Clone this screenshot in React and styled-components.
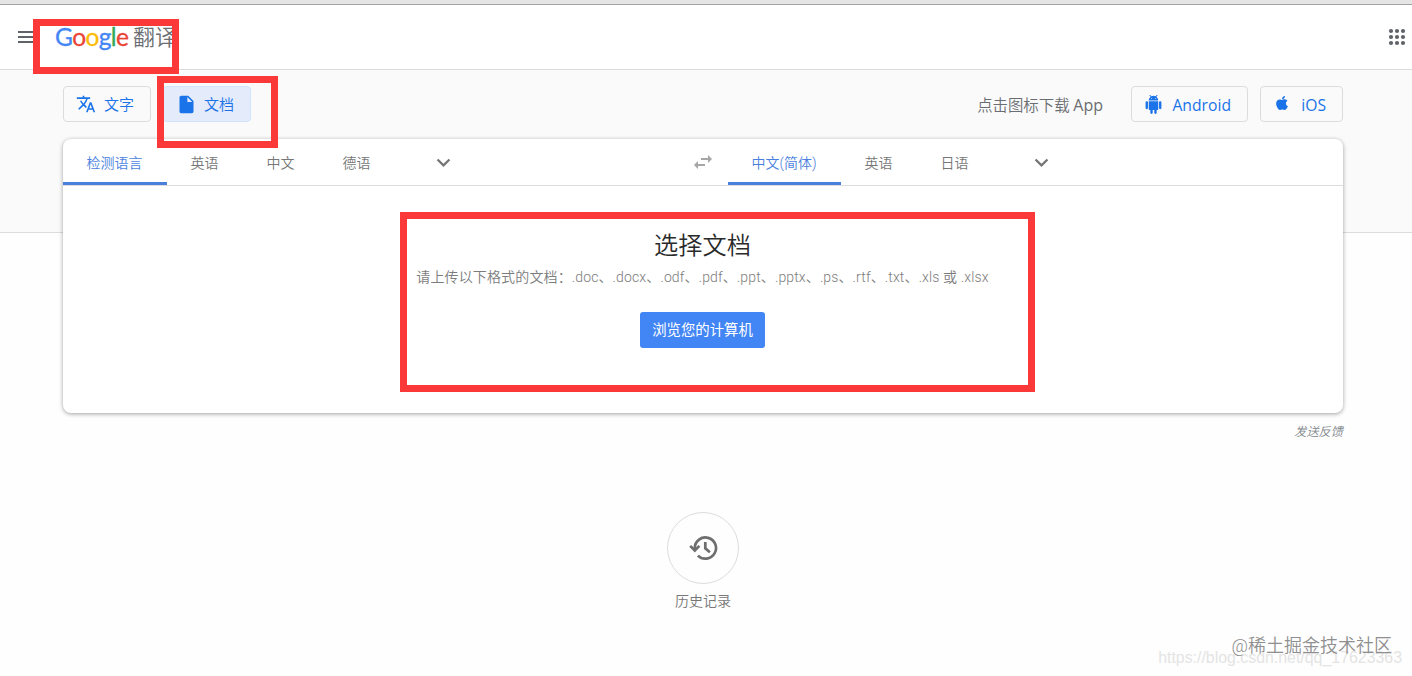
import React from 'react'
import styled, { createGlobalStyle } from 'styled-components'
import { MdMenu, MdTranslate, MdInsertDriveFile, MdExpandMore, MdSwapHoriz } from 'react-icons/md'
import { FaApple } from 'react-icons/fa'

const logoLetters = [
  ['G', '#4285f4'],
  ['o', '#ea4335'],
  ['o', '#fbbc05'],
  ['g', '#4285f4'],
  ['l', '#34a853'],
  ['e', '#ea4335'],
]

function AndroidIcon() {
  return (
    <svg width="19" height="19" viewBox="0 0 24 24" fill="#1a73e8">
      <path d="M6 18c0 .55.45 1 1 1h1v3.5c0 .83.67 1.5 1.5 1.5s1.5-.67 1.5-1.5V19h2v3.5c0 .83.67 1.5 1.5 1.5s1.5-.67 1.5-1.5V19h1c.55 0 1-.45 1-1V8H6v10zM3.5 8C2.67 8 2 8.67 2 9.5v7c0 .83.67 1.5 1.5 1.5S5 17.33 5 16.5v-7C5 8.67 4.33 8 3.5 8zm17 0c-.83 0-1.5.67-1.5 1.5v7c0 .83.67 1.5 1.5 1.5s1.5-.67 1.5-1.5v-7c0-.83-.67-1.5-1.5-1.5zm-4.97-5.84l1.3-1.3c.2-.2.2-.51 0-.71-.2-.2-.51-.2-.71 0l-1.48 1.48C13.85 1.23 12.95 1 12 1c-.96 0-1.86.23-2.66.63L7.85.15c-.2-.2-.51-.2-.71 0-.2.2-.2.51 0 .71l1.31 1.31C6.97 3.26 6 5.01 6 7h12c0-1.99-.97-3.75-2.47-4.84zM10 5H9V4h1v1zm5 0h-1V4h1v1z" />
    </svg>
  )
}

function AppsIcon() {
  const dots = [6, 12, 18]
  return (
    <svg width="24" height="24" viewBox="0 0 24 24" fill="#5f6368">
      {dots.map(y => dots.map(x => <circle key={`${x}-${y}`} cx={x} cy={y} r="2.1" />))}
    </svg>
  )
}

function HistoryIcon() {
  return (
    <svg width="32" height="32" viewBox="0 0 32 32" fill="none" stroke="#6e6e6e" strokeWidth="2.7">
      <path d="M7.8 17.5V16a10.6 10.6 0 1 1 3.1 7.6" />
      <path d="M3.2 13.9l4.6 4.6 4.6-4.6" />
      <path d="M18.3 10v6.4l4.6 3.9" />
    </svg>
  )
}

function App() {
  return (
    <Page>
      <GlobalStyle />
      <TopStrip />
      <Header>
        <MenuIcon />
        <Logo>
          <Brand>
            {logoLetters.map(([letter, color], i) => (
              <Letter key={i} color={color}>{letter}</Letter>
            ))}
          </Brand>
          <Product>翻译</Product>
        </Logo>
        <AppsIcon />
      </Header>

      <Band />
      <Main>
        <Toolbar>
          <ModeButton>
            <MdTranslate size={20} />
            <span>文字</span>
          </ModeButton>
          <ModeButton $active>
            <MdInsertDriveFile size={21} />
            <span>文档</span>
          </ModeButton>
          <StoreText>点击图标下载 <span>App</span></StoreText>
          <StoreButton $width={117}>
            <AndroidIcon />
            <span>Android</span>
          </StoreButton>
          <StoreButton $width={83}>
            <AppleIcon />
            <span>iOS</span>
          </StoreButton>
        </Toolbar>

        <Card>
          <LanguageBar>
            <Side $width={629}>
              <Tab $active $width={104}>检测语言</Tab>
              <Tab>英语</Tab>
              <Tab>中文</Tab>
              <Tab>德语</Tab>
              <MoreIcon />
            </Side>
            <SwapIcon />
            <Side>
              <Tab $active $width={113}>中文(简体)</Tab>
              <Tab>英语</Tab>
              <Tab>日语</Tab>
              <MoreIcon />
            </Side>
          </LanguageBar>
          <Upload>
            <Title>选择文档</Title>
            <Formats>
              请上传以下格式的文档：.doc、.docx、.odf、.pdf、.ppt、.pptx、.ps、.rtf、.txt、.xls 或 .xlsx
            </Formats>
            <Browse>浏览您的计算机</Browse>
          </Upload>
        </Card>
        <Feedback>发送反馈</Feedback>
        <History>
          <HistoryCircle>
            <HistoryIcon />
          </HistoryCircle>
          历史记录
        </History>
      </Main>

      <Marker $x={33} $y={19} $w={146} $h={55} />
      <Marker $x={157} $y={76} $w={121} $h={72} />
      <Marker $x={400} $y={212} $w={635} $h={180} />
      <BlogMark>https://blog.csdn.net/qq_17623363</BlogMark>
      <SiteMark>@稀土掘金技术社区</SiteMark>
    </Page>
  )
}

export default App

const GlobalStyle = createGlobalStyle`
*{
    box-sizing:border-box;
}
body{
    margin:0;
    background:#fefefe;
    font-family:Roboto, "Noto Sans CJK SC", sans-serif;
    font-weight:350;
}
button{
    font-family:inherit;
    font-weight:inherit;
    padding:0;
}
`

const Page = styled.div`
position:relative;
width:1412px;
height:676px;
overflow:hidden;
`

const TopStrip = styled.div`
height:5px;
background:#e5e5e5;
border-bottom:1px solid #a3a3a3;
`

const Header = styled.header`
display:flex;
align-items:center;
height:65px;
padding:0 3px 0 15px;
background:white;
border-bottom:1px solid #dadce0;
`

const MenuIcon = styled(MdMenu)`
width:24px;
height:24px;
color:#5f6368;
`

const Logo = styled.div`
display:flex;
align-items:center;
flex:1;
padding-left:15px;
white-space:nowrap;
`

const Brand = styled.div`
width:79px;
padding:0 0 1px 1px;
font-family:Lato, sans-serif;
font-weight:400;
font-size:24.5px;
line-height:30px;
letter-spacing:-0.6px;
`

const Letter = styled.span`
color:${props => props.color};
-webkit-text-stroke:0.3px ${props => props.color};
`

const Product = styled.div`
padding-top:2px;
font-size:22px;
line-height:30px;
color:#6a6d71;
`

const Band = styled.div`
height:163px;
margin-bottom:-163px;
background:#fafafa;
border-bottom:1px solid #dadce0;
`

const Main = styled.main`
position:relative;
width:1280px;
margin-left:63px;
padding-top:16px;
`

const Toolbar = styled.div`
display:flex;
align-items:center;
height:36px;
`

const ModeButton = styled.button`
display:flex;
align-items:center;
gap:${props => props.$active ? 7 : 8}px;
width:88px;
height:36px;
margin-right:12px;
padding-left:12px;
border:1px solid ${props => props.$active ? '#d2e3fc' : '#dadce0'};
border-radius:4px;
background:${props => props.$active ? '#e4ebfb' : 'transparent'};
color:#1a73e8;
font-size:15px;
span{
    padding-bottom:2px;
}
`

const StoreText = styled.div`
margin-left:auto;
margin-right:16px;
font-size:15.4px;
color:#6a6d71;
span{
    font-family:"Open Sans", sans-serif;
    font-weight:400;
    font-size:16px;
}
`

const StoreButton = styled.button`
display:flex;
align-items:center;
justify-content:space-between;
width:${props => props.$width}px;
height:36px;
margin-left:12px;
padding:0 16px 0 12px;
border:1px solid #dadce0;
border-radius:4px;
background:transparent;
color:#1a73e8;
font-family:"Open Sans", sans-serif;
font-weight:400;
font-size:15.7px;
span{
    padding-top:2px;
}
`

const AppleIcon = styled(FaApple)`
width:16px;
height:16px;
margin:0 0 2px 1px;
`

const Card = styled.section`
height:274px;
margin-top:17px;
background:white;
border-radius:8px;
box-shadow:0 1px 4px rgba(0,0,0,0.37);
`

const LanguageBar = styled.nav`
display:flex;
align-items:center;
height:47px;
border-bottom:1px solid #dadce0;
`

const Side = styled.div`
display:flex;
align-items:center;
width:${props => props.$width ? `${props.$width}px` : 'auto'};
`

const Tab = styled.div`
width:${props => props.$width || 76}px;
height:46px;
padding:3px 1px 0 0;
line-height:43px;
text-align:center;
font-size:14px;
color:${props => props.$active ? '#4a7fe0' : '#777'};
border-bottom:3px solid ${props => props.$active ? '#4a80dc' : 'transparent'};
`

const MoreIcon = styled(MdExpandMore)`
width:27px;
height:27px;
margin:1px 0 0 34.5px;
color:#757575;
`

const SwapIcon = styled(MdSwapHoriz)`
width:24px;
height:24px;
margin:0 13px 0 -1px;
color:#a6a6a6;
`

const Upload = styled.div`
display:flex;
flex-direction:column;
align-items:center;
padding:42px 1px 0 0;
`

const Title = styled.h1`
margin:0;
font-size:24.2px;
font-weight:350;
line-height:36px;
color:#2a2a2a;
`

const Formats = styled.p`
margin:3px 0 24px;
font-size:14px;
line-height:21px;
letter-spacing:0.13px;
color:#7c7c7c;
white-space:nowrap;
`

const Browse = styled.button`
width:125px;
height:36px;
padding-bottom:3px;
border:0;
border-radius:3px;
background:#4285f4;
color:white;
font-size:14.4px;
font-weight:400;
`

const Feedback = styled.div`
margin-top:9px;
text-align:right;
font-size:12.2px;
line-height:20px;
font-style:italic;
color:#80868b;
`

const History = styled.div`
display:flex;
flex-direction:column;
align-items:center;
margin-top:70px;
font-size:14px;
line-height:20px;
color:#777;
`

const HistoryCircle = styled.div`
display:flex;
align-items:center;
justify-content:center;
width:72px;
height:72px;
margin-bottom:7px;
border:1px solid #dcdcdc;
border-radius:50%;
`

// red frames drawn over the page
const Marker = styled.div`
position:absolute;
left:${props => props.$x}px;
top:${props => props.$y}px;
width:${props => props.$w}px;
height:${props => props.$h}px;
border:7px solid #fb3939;
`

const BlogMark = styled.div`
position:absolute;
right:10px;
bottom:8px;
font-family:"Liberation Sans", sans-serif;
font-weight:400;
font-size:15.9px;
line-height:20px;
color:#e4e4e4;
`

const SiteMark = styled.div`
position:absolute;
right:20px;
bottom:18px;
font-size:18px;
line-height:24px;
color:#8f8f8f;
`
